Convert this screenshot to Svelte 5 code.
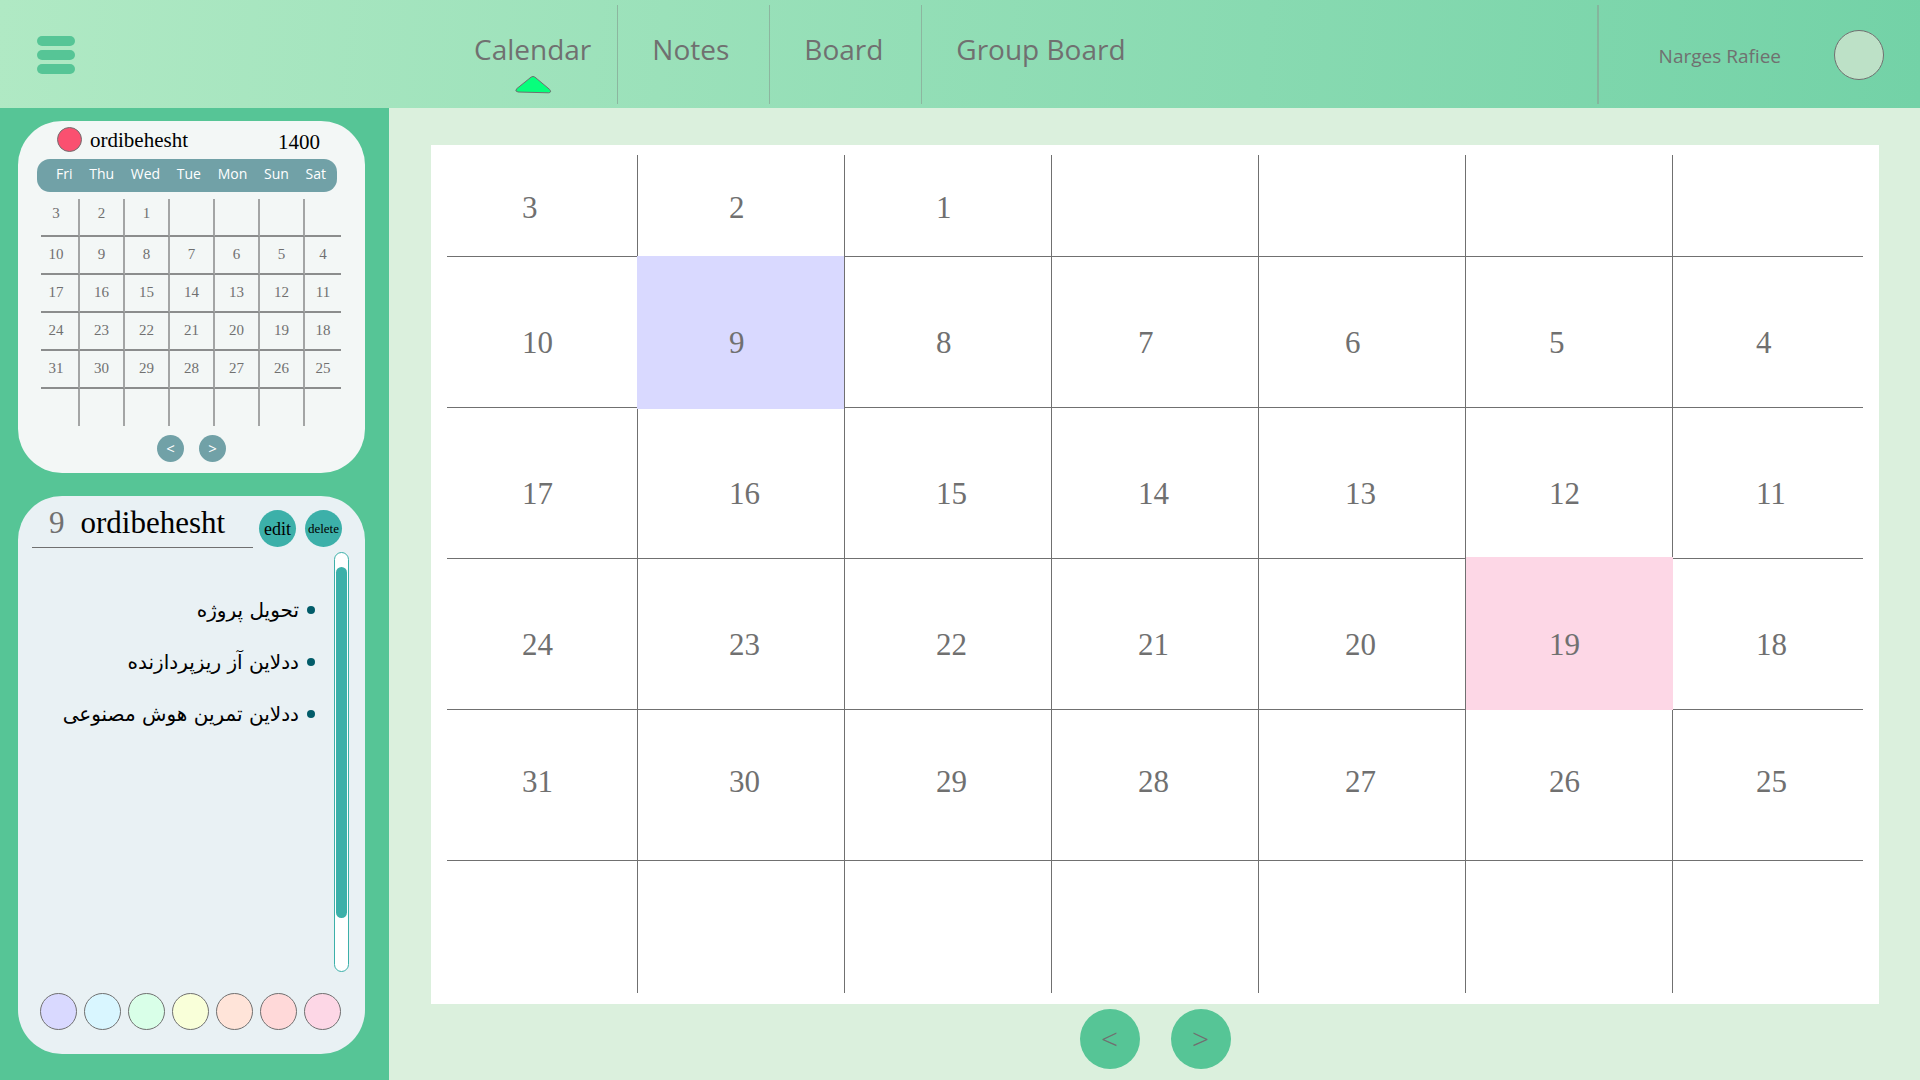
<script>
  const tabs = ['Calendar', 'Notes', 'Board', 'Group Board'];
  let active = $state('Calendar');
  const dayNames = ['Fri', 'Thu', 'Wed', 'Tue', 'Mon', 'Sun', 'Sat'];
  const weeks = [
    [3, 2, 1, '', '', '', ''],
    [10, 9, 8, 7, 6, 5, 4],
    [17, 16, 15, 14, 13, 12, 11],
    [24, 23, 22, 21, 20, 19, 18],
    [31, 30, 29, 28, 27, 26, 25],
    ['', '', '', '', '', '', '']
  ];
  const marks = { 9: 'lilac', 19: 'pink' };
  const tasks = ['تحویل پروژه', 'ددلاین آز ریزپردازنده', 'ددلاین تمرین هوش مصنوعی'];
  const colours = ['lilac', 'sky', 'mint', 'lemon', 'peach', 'coral', 'pink'];
</script>

<div class="app">
  <header>
    <button class="menu" aria-label="Menu"><i></i><i></i><i></i></button>
    <nav>
      {#each tabs as tab}
        <a href="#{tab}" onclick={() => (active = tab)}>
          <span>{tab}</span>
          {#if tab === active}
            <svg width="38" height="19" viewBox="0 0 38 19" aria-hidden="true">
              <path d="M17 2.2Q19 .6 21 2.2L35.6 14.4Q38 17.6 34.5 17.8L4 17Q.4 16.4 2.6 13.8Z" fill="#07ff7c" stroke="#707070" />
            </svg>
          {/if}
        </a>
      {/each}
    </nav>
    <div class="user">
      <span>Narges Rafiee</span>
      <button class="avatar" aria-label="Profile"></button>
    </div>
  </header>

  <div class="body">
    <aside>
      <section class="card month">
        <div class="caption">
          <i class="dot"></i>
          <h2>ordibehesht</h2>
          <span class="year">1400</span>
        </div>
        <table class="mini">
          <thead>
            <tr>{#each dayNames as d}<th>{d}</th>{/each}</tr>
          </thead>
          <tbody>
            {#each weeks as week}
              <tr>{#each week as day}<td>{day}</td>{/each}</tr>
            {/each}
          </tbody>
        </table>
        <div class="pager">
          <button aria-label="Previous month">&lt;</button>
          <button aria-label="Next month">&gt;</button>
        </div>
      </section>

      <section class="card agenda">
        <div class="heading">
          <h2><span>9</span>ordibehesht</h2>
          <button class="edit">edit</button>
          <button class="delete">delete</button>
        </div>
        <div class="content">
          <ul dir="rtl" lang="fa">
            {#each tasks as task}<li>{task}</li>{/each}
          </ul>
          <div class="track"><div class="thumb"></div></div>
        </div>
        <div class="swatches">
          {#each colours as c}<button class={c} aria-label={c}></button>{/each}
        </div>
      </section>
    </aside>

    <main>
      <div class="panel">
        <table class="big">
          <tbody>
            {#each weeks as week}
              <tr>
                {#each week as day}
                  <td class:marked={marks[day]}>
                    {#if marks[day]}<i class="fill {marks[day]}"></i>{/if}
                    <span>{day}</span>
                  </td>
                {/each}
              </tr>
            {/each}
          </tbody>
        </table>
      </div>
      <div class="pager large">
        <button aria-label="Previous">&lt;</button>
        <button aria-label="Next">&gt;</button>
      </div>
    </main>
  </div>
</div>

<style>
  :global(body) { margin: 0; }
  * { box-sizing: border-box; }
  button { padding: 0; border: 0; font: inherit; cursor: pointer; }
  h2 { margin: 0; font-weight: 400; }
  .app {
    min-height: 100vh;
    display: flex;
    flex-direction: column;
    font-family: "Open Sans", sans-serif;
    color: #707070;
    background: #dbf0dd;
  }

  header {
    height: 108px;
    display: flex;
    padding: 5px 36px 4px 37px;
    background: linear-gradient(95deg, #b0e9c4, #73d2a7);
  }
  .menu {
    width: 38px;
    display: flex;
    flex-direction: column;
    justify-content: center;
    gap: 4px;
    background: none;
  }
  .menu i { height: 10px; border-radius: 5px; background: #56c596; }
  nav { display: flex; margin-left: 363px; font-size: 28px; line-height: 40px; }
  nav a {
    min-width: 152px;
    padding: 24px 26px 0 36px;
    display: flex;
    flex-direction: column;
    align-items: center;
    gap: 6px;
    border-right: 1px solid #8cb69f;
    color: inherit;
    text-decoration: none;
    white-space: nowrap;
  }
  nav a:not(:first-child) { align-items: flex-start; padding-left: 34px; }
  nav a:last-child { border: 0; }
  .user {
    margin-left: auto;
    display: flex;
    align-items: center;
    gap: 53px;
    padding-left: 60px;
    border-left: 2px solid #84b69d;
    font-size: 19px;
  }
  .user span { padding-top: 3px; }
  .avatar { width: 50px; height: 50px; border: 1px solid #707070; border-radius: 50%; background: #bde1c7; }

  .body { flex: 1; display: flex; }
  aside {
    width: 389px;
    flex: none;
    display: flex;
    flex-direction: column;
    gap: 23px;
    padding: 13px 24px 26px 18px;
    background: #56c596;
  }
  .card { border-radius: 44px; font-family: "Liberation Serif", serif; }
  .month { height: 352px; padding: 6px 28px 11px 19px; background: #f3f7f6; }
  .caption { height: 32px; display: flex; align-items: flex-start; padding: 0 17px 0 20px; color: #000; }
  .caption h2 { font-size: 21px; line-height: 26px; }
  .year { margin-left: auto; font-size: 21px; line-height: 30px; }
  .dot { width: 25px; height: 25px; margin-right: 8px; border: 1px solid #707070; border-radius: 50%; background: #fa5070; }
  table { width: 100%; table-layout: fixed; border-spacing: 0; }
  td, th { padding: 0; font-weight: 400; }
  .mini, .mini thead, .mini tbody { display: block; }
  .mini thead {
    padding: 0 11px 0 19px;
    border-radius: 13px;
    background: #71a1a7;
    color: #fff;
    font: 14px/29px "Open Sans", sans-serif;
  }
  .mini thead tr { height: 33px; display: flex; justify-content: space-between; }
  .mini tbody { margin: 7px -4px 0 4px; }
  .mini tbody tr { display: grid; grid-template-columns: 39px repeat(5, 45px) 36px; }
  .mini td {
    height: 38px;
    border-right: 2px solid #a3a5a5;
    border-bottom: 2px solid #8b8d8d;
    font-size: 15px;
    line-height: 34px;
    text-align: center;
  }
  .mini td:first-child { padding-right: 7px; }
  .mini tbody tr:first-child td { line-height: 28px; }
  .mini td:last-child, .big td:last-child { border-right: 0; }
  .mini tbody tr:last-child td { height: 37px; border-bottom: 0; }
  .big tr:last-child td { border-bottom: 0; }
  .pager { display: flex; justify-content: center; gap: 15px; margin-top: 9px; }
  .pager button {
    width: 27px;
    height: 27px;
    border-radius: 50%;
    background: #71a1a7;
    color: #fff;
    font: 15px/25px "Open Sans", sans-serif;
  }
  .month .pager { padding-left: 9px; }

  .agenda { flex: 1; display: flex; flex-direction: column; padding: 0 16px 24px 14px; background: #e9f1f4; }
  .heading { display: flex; align-items: flex-end; height: 52px; color: #000; }
  .heading h2 {
    flex: 1;
    height: 52px;
    padding: 9px 0 0 17px;
    margin-right: 6px;
    border-bottom: 1px solid #707070;
    font-size: 31px;
    line-height: 36px;
    white-space: nowrap;
  }
  .heading span { margin-right: 16px; color: #707070; }
  .heading button {
    width: 37px;
    height: 37px;
    margin-bottom: 1px;
    border-radius: 50%;
    background: #3cb0a9;
    color: #000;
    line-height: 34px;
  }
  .heading .edit { margin-right: 9px; font-size: 18px; }
  .heading .delete { margin-right: 7px; font-size: 13px; }
  .content { display: flex; height: 420px; margin-top: 4px; }
  ul { flex: 1; margin: 0; padding: 33px 19px 0 0; list-style: none; color: #000; font: 20px/48px "DejaVu Sans", sans-serif; }
  li { display: flex; align-items: center; gap: 8px; height: 52px; padding-bottom: 2px; white-space: nowrap; }
  li::before { content: ""; width: 8px; height: 8px; flex: none; border-radius: 50%; background: #025c69; }
  .track { width: 15px; padding: 14px 1px; border: 1px solid #3cb0a9; border-radius: 8px; background: #fff; }
  .thumb { height: 351px; border-radius: 6px; background: #3cb0a9; }
  .swatches { display: flex; gap: 7px; margin-top: auto; padding-left: 8px; }
  .swatches button { width: 37px; height: 37px; border: 1px solid #707070; border-radius: 50%; }
  .lilac { background: #d9d9ff; }
  .sky { background: #d9f6ff; }
  .mint { background: #d9ffe8; }
  .lemon { background: #f9ffd9; }
  .peach { background: #ffe4d9; }
  .coral { background: #ffd9d9; }
  .pink { background: #fdd7e6; }

  main { flex: 1; min-width: 0; padding: 37px 41px 11px 42px; }
  .panel { padding: 10px 16px 11px; background: #fff; }
  .big { font: 31px/36px "Liberation Serif", serif; }
  .big td {
    height: 151px;
    padding: 68px 0 0 91px;
    vertical-align: top;
    border-right: 1px solid #707070;
    border-bottom: 1px solid #707070;
  }
  .big td:first-child { width: 191px; padding-left: 75px; }
  .big td:last-child { width: 190px; }
  .big td:nth-child(n + 4) { padding-left: 86px; }
  .big td:nth-child(n + 6) { padding-left: 83px; }
  .big tr:first-child td { height: 102px; padding-top: 35px; }
  .big tr:nth-child(5) td { padding-top: 54px; }
  .big tr:last-child td { height: 132px; }
  .marked { position: relative; }
  .marked span { position: relative; }
  .fill { position: absolute; inset: -1px 0 -2px -1px; }
  .fill.pink { inset: -2px -1px -1px 0; }
  .large { gap: 31px; margin-top: 5px; }
  .large button { width: 60px; height: 60px; background: #56c596; color: #707070; font-size: 30px; font-weight: 300; line-height: 54px; }
</style>
